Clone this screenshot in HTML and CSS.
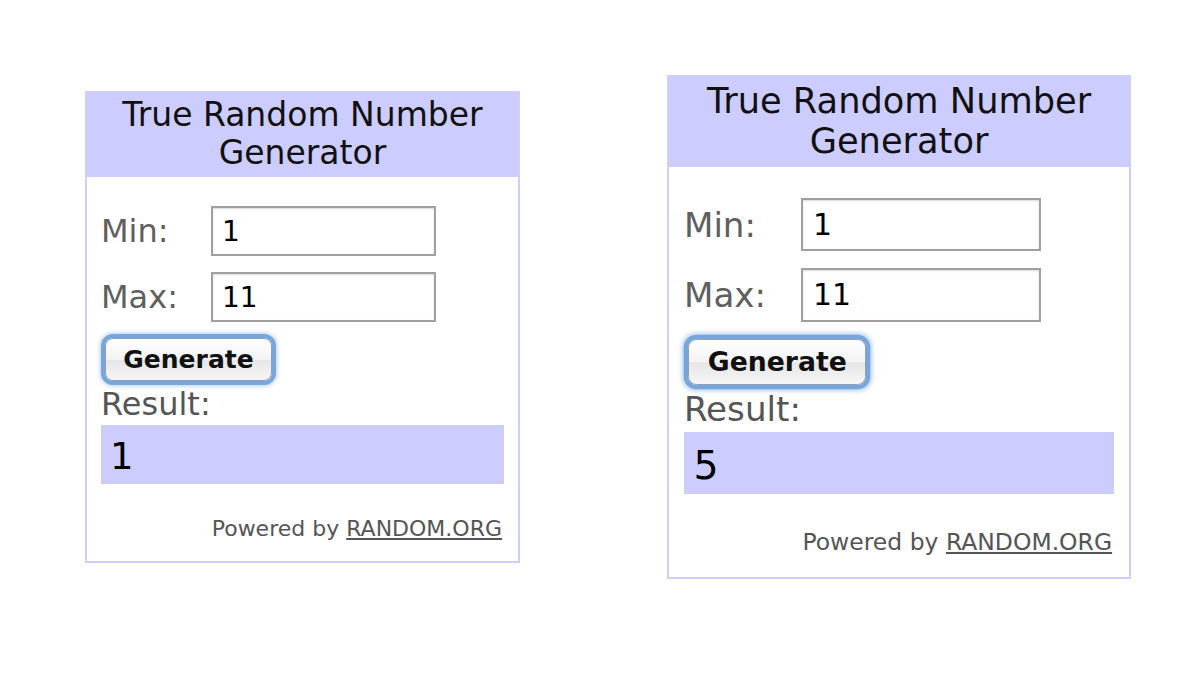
FILE: index.html
```html
<!DOCTYPE html>
<html lang="en">
<head>
    <meta charset="UTF-8">
    <meta name="viewport" content="width=device-width, initial-scale=1.0">
    <title>True Random Number Generator</title>
    <link rel="stylesheet" href="styles.css">
</head>
<body>
    <div class="page">
        <!-- Widget 1 -->
        <div class="widget">
            <div class="widget-header">True Random Number<br>Generator</div>
            <div class="widget-body">
                <div class="field">
                    <label for="min1">Min:</label>
                    <input type="text" id="min1" value="1">
                </div>
                <div class="field">
                    <label for="max1">Max:</label>
                    <input type="text" id="max1" value="11">
                </div>
                <button class="generate">Generate</button>
                <div class="result-label">Result:</div>
                <div class="result">1</div>
                <div class="powered">Powered by <a href="#">RANDOM.ORG</a></div>
            </div>
        </div>

        <!-- Widget 2, same widget captured a bit larger -->
        <div class="widget widget-large">
            <div class="widget-header">True Random Number<br>Generator</div>
            <div class="widget-body">
                <div class="field">
                    <label for="min2">Min:</label>
                    <input type="text" id="min2" value="1">
                </div>
                <div class="field">
                    <label for="max2">Max:</label>
                    <input type="text" id="max2" value="11">
                </div>
                <button class="generate">Generate</button>
                <div class="result-label">Result:</div>
                <div class="result">5</div>
                <div class="powered">Powered by <a href="#">RANDOM.ORG</a></div>
            </div>
        </div>
    </div>
</body>
</html>
```

FILE: styles.css
```css
/* Page styling */
body {
    margin: 0;
    background: #fff;
    font-family: "DejaVu Sans", Verdana, sans-serif;
    color: #555;
}

/* Both widgets side by side, centred vertically */
.page {
    height: 654px;
    display: flex;
    align-items: center;
    padding-left: 85px;
    gap: 147px;
}

/* Widget box */
.widget {
    box-sizing: border-box;
    width: 435px;
    border: 2px solid #cfcffa;
    background: #fff;
}

.widget-large {
    zoom: 1.067;
}

.widget-header {
    background: #ccccff;
    color: #111;
    text-align: center;
    font-size: 33px;
    line-height: 38px;
    padding: 3px 0 5px;
}

.widget-body {
    padding: 29px 14px 19px;
}

/* Min / Max rows */
.field {
    display: flex;
    align-items: center;
    margin-bottom: 16px;
}

.field label {
    width: 110px;
    font-size: 32px;
    color: #5f5f5f;
}

.field input {
    box-sizing: border-box;
    width: 225px;
    height: 50px;
    border: 2px solid #a0a0a0;
    box-shadow: inset 0 1px 2px rgba(0, 0, 0, 0.15);
    padding: 0 9px;
    font-family: "DejaVu Sans", Verdana, sans-serif;
    font-size: 28px;
    color: #000;
    outline: none;
}

/* Mac style focused button */
.generate {
    display: block;
    margin: 2px 0 0 4px;
    width: 167px;
    height: 43px;
    padding: 0;
    border: 1px solid #8c9fb5;
    border-radius: 8px;
    background: linear-gradient(#ffffff, #f3f3f3 50%, #e6e6e6 52%, #f6f6f6);
    box-shadow: 0 0 0 4px #78a6dc, 0 0 4px 5px rgba(118, 165, 220, 0.55);
    font-family: "DejaVu Sans", Verdana, sans-serif;
    font-size: 25px;
    font-weight: bold;
    color: #111;
}

.result-label {
    font-size: 32px;
    line-height: 38px;
    margin-top: 4px;
    margin-bottom: 2px;
}

.result {
    background: #ccccff;
    color: #000;
    font-size: 37px;
    line-height: 55px;
    padding: 4px 9px 0;
}

.powered {
    text-align: right;
    font-size: 22px;
    line-height: 26px;
    margin-top: 32px;
    padding-right: 2px;
}

.powered a {
    color: #555;
    text-decoration: underline;
}
```
